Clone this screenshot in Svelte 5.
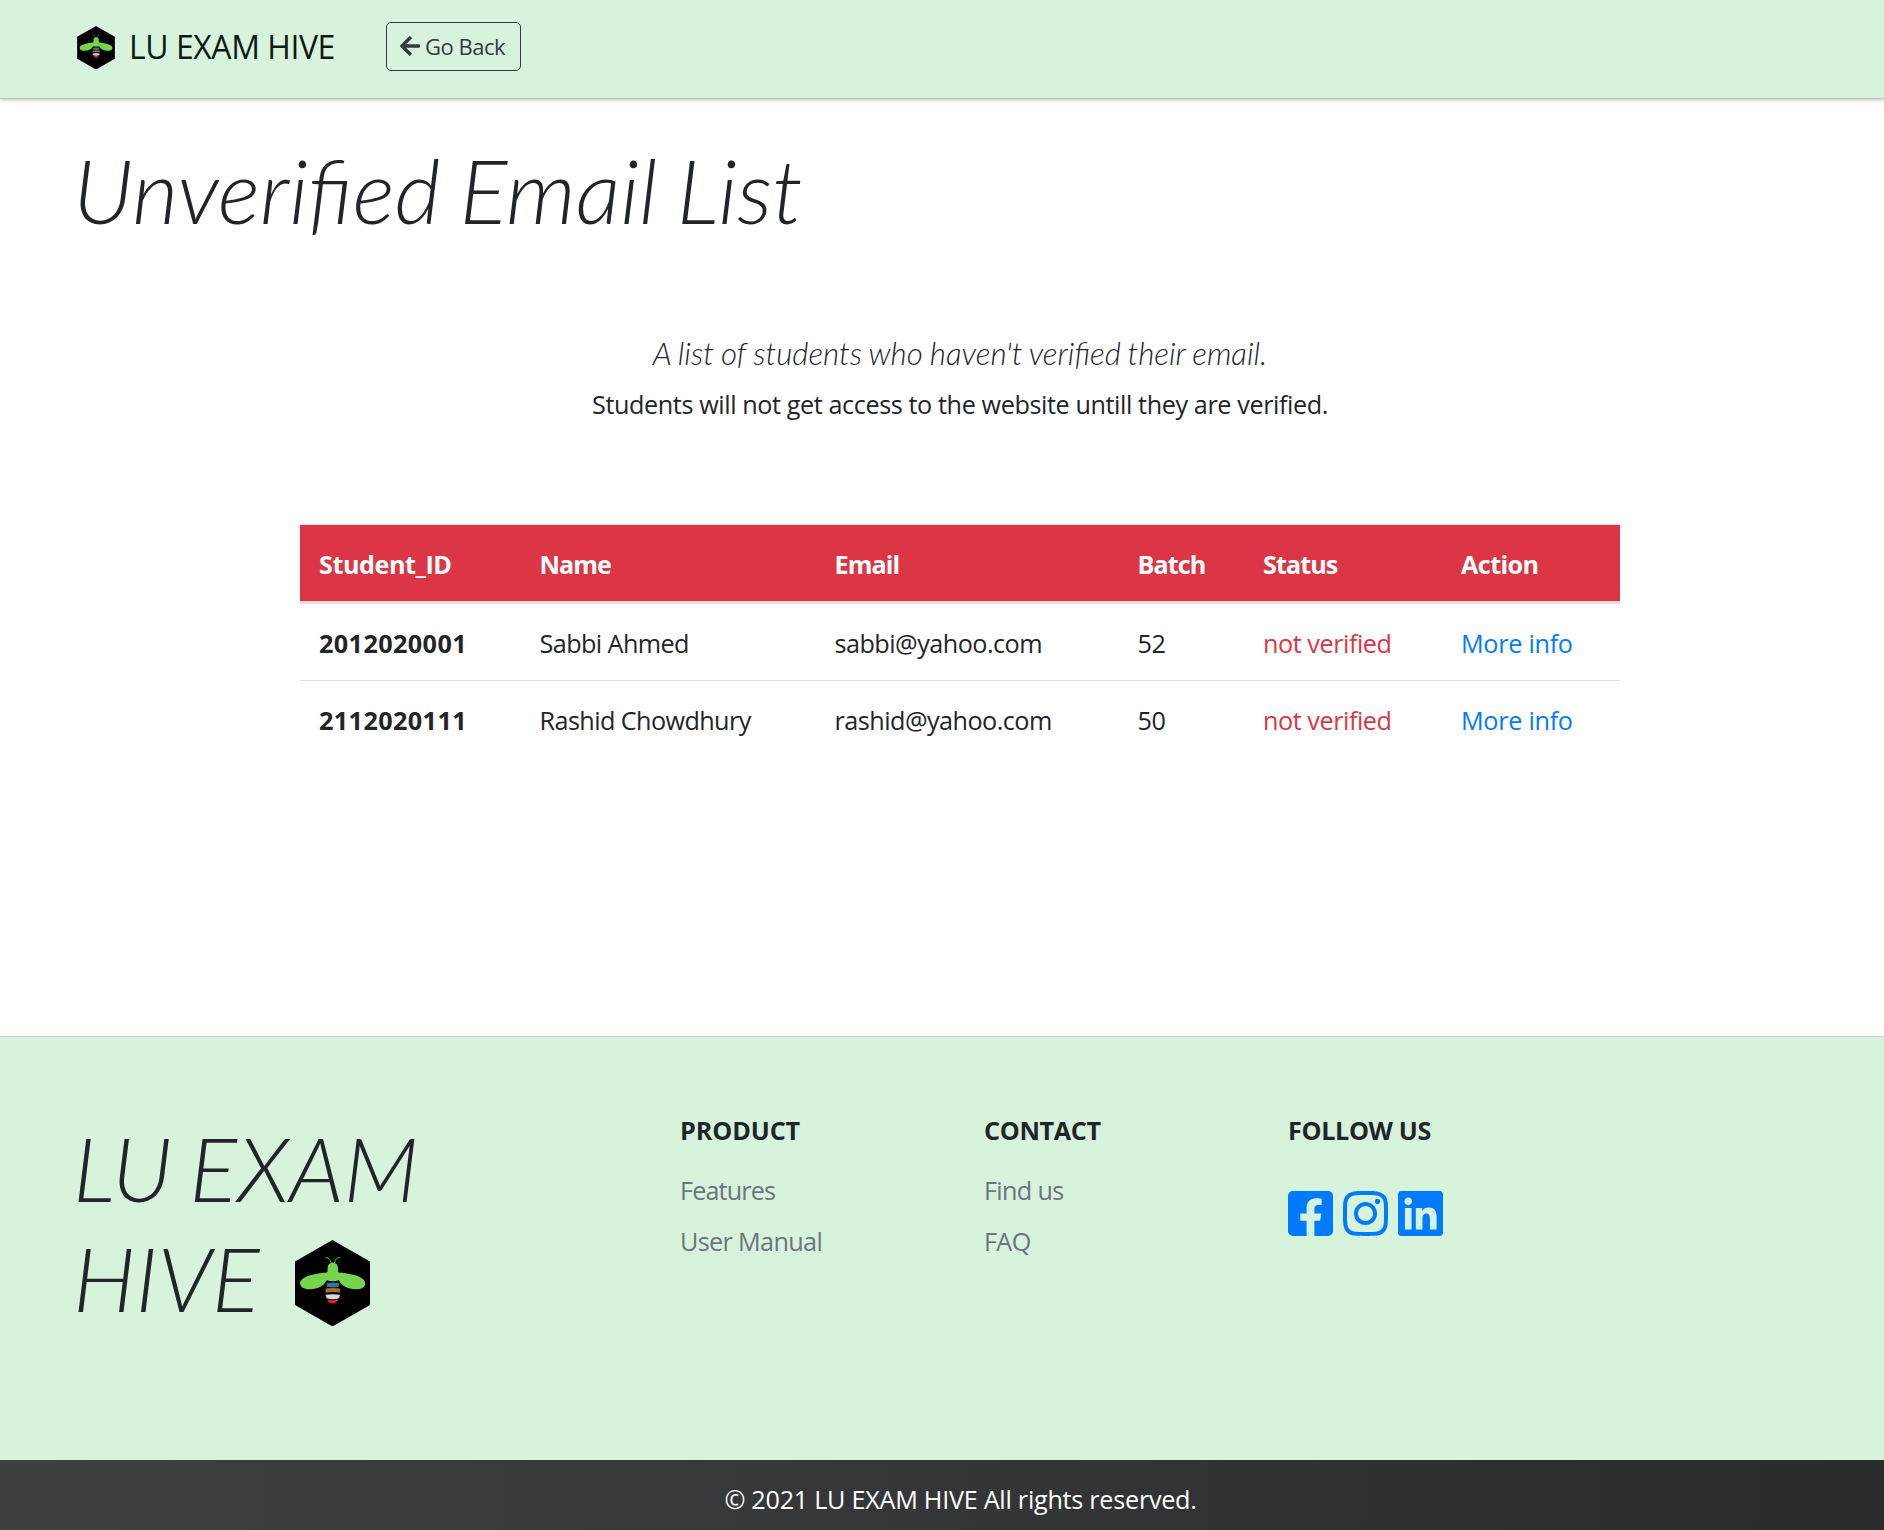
<script>
  const students = [
    { id: '2012020001', name: 'Sabbi Ahmed', email: 'sabbi@yahoo.com', batch: '52' },
    { id: '2112020111', name: 'Rashid Chowdhury', email: 'rashid@yahoo.com', batch: '50' },
  ];
</script>

{#snippet logo(kind)}
  <svg class={kind} viewBox="0 0 75 86.5" aria-hidden="true">
    <path d="M37.5 0 75 21.5V65L37.5 86.5 0 65V21.5Z" fill="#000" />
    <path d="M30.3 17.8C33.5 17.4 34.8 18.6 36.4 23.5M45.3 17.8C42.1 17.4 40.8 18.6 39.2 23.5" fill="none" stroke="#74d44c" stroke-width="0.9" />
    <path d="M32.6 28a5.2 5.6 0 0 1 10.4 0c0 2-.1 3 .6 4.600C52 33.300 66 35 69.700 41.300 72 46.200 67 49.600 60.500 49.300 52.500 48.900 46.500 46 43.900 40.300Q37.800 42 31.700 40.300C29.100 46 23.100 48.900 15.100 49.300 8.600 49.600 3.600 46.200 5.400 41.300 9.600 35 23.600 33.300 32 32.600c.7-1.600.6-2.600.6-4.600Z" fill="#74d44c" />
    <path d="M31.6 43.200Q37.8 42 44 43.200L43.600 46.800Q37.800 48 32 46.800Z" fill="#2e75b6" />
    <path d="M30.600 48.500Q37.800 47.500 45 48.500V52.400Q37.800 51.600 30.600 52.400Z" fill="#b06d22" />
    <path d="M30.600 54.800Q37.800 53.800 45 54.800L44 58.300Q37.800 60 31.600 58.300Z" fill="#d9d9d9" />
    <path d="M32.300 59.600Q37.800 61 43.300 59.600Q41.600 63.600 37.800 63.600T32.300 59.600Z" fill="#e3242b" />
  </svg>
{/snippet}

<header class="navbar">
  <a class="brand" href="#home">
    {@render logo('logo-small')}
    <span>LU EXAM HIVE</span>
  </a>
  <button class="back" type="button">
    <svg class="arrow" viewBox="0 32 448 448" aria-hidden="true">
      <path fill="currentColor" d="M257.5 445.100l-22.200 22.200c-9.400 9.400-24.600 9.400-33.900 0L7 273c-9.400-9.400-9.400-24.600 0-33.900L201.400 44.700c9.400-9.400 24.600-9.400 33.900 0l22.200 22.200c9.500 9.500 9.300 25-.4 34.300L136.600 216H424c13.300 0 24 10.700 24 24v32c0 13.300-10.700 24-24 24H136.600l120.500 114.800c9.800 9.300 10 24.800.4 34.300z" />
    </svg>
    <span>Go Back</span>
  </button>
</header>

<main>
  <h1>Unverified Email List</h1>
  <p class="lead">A list of students who haven't verified their email.</p>
  <p class="note">Students will not get access to the website untill they are verified.</p>

  <table>
    <colgroup>
      <col class="c-id" /><col class="c-name" /><col class="c-email" /><col class="c-batch" /><col class="c-status" /><col />
    </colgroup>
    <thead>
      <tr>
        <th class="wide">Student_ID</th>
        <th>Name</th>
        <th>Email</th>
        <th>Batch</th>
        <th>Status</th>
        <th class="last">Action</th>
      </tr>
    </thead>
    <tbody>
      {#each students as s}
        <tr>
          <th class="id">{s.id}</th>
          <td class="name">{s.name}</td>
          <td class="email">{s.email}</td>
          <td>{s.batch}</td>
          <td class="status">not verified</td>
          <td class="action"><a href="#info">More info</a></td>
        </tr>
      {/each}
    </tbody>
  </table>
</main>

<footer>
  <div class="columns">
    <h2 class="title">LU EXAM<br />HIVE {@render logo('logo-large')}</h2>
    <section>
      <h3 class="product">PRODUCT</h3>
      <a class="features" href="#features">Features</a>
      <a href="#manual">User Manual</a>
    </section>
    <section>
      <h3>CONTACT</h3>
      <a href="#find">Find us</a>
      <a href="#faq">FAQ</a>
    </section>
    <section>
      <h3>FOLLOW US</h3>
      <div class="social">
        <svg viewBox="0 32 448 448" role="img" aria-label="Facebook">
          <path d="M400 32H48A48 48 0 0 0 0 80v352a48 48 0 0 0 48 48h137.250V327.690h-63V256h63v-54.640c0-62.150 37-96.480 93.670-96.480 27.140 0 55.520 4.840 55.520 4.840v61h-31.270c-30.810 0-40.420 19.120-40.420 38.730V256h68.780l-11 71.690h-57.780V480H400a48 48 0 0 0 48-48V80a48 48 0 0 0-48-48z" />
        </svg>
        <svg viewBox="0 32 448 448" role="img" aria-label="Instagram">
          <path d="M224.100 141c-63.600 0-114.900 51.300-114.900 114.900s51.300 114.900 114.900 114.900S339 319.500 339 255.900 287.700 141 224.100 141zm0 189.600c-41.100 0-74.700-33.500-74.700-74.700s33.500-74.700 74.700-74.700 74.700 33.500 74.700 74.700-33.600 74.700-74.700 74.700zm146.400-194.300c0 14.900-12 26.800-26.800 26.800-14.900 0-26.800-12-26.800-26.800s12-26.800 26.800-26.800 26.800 12 26.800 26.800zm76.100 27.200c-1.700-35.900-9.900-67.700-36.200-93.900-26.200-26.200-58-34.400-93.900-36.200-37-2.100-147.900-2.100-184.900 0-35.800 1.700-67.600 9.900-93.900 36.100s-34.400 58-36.200 93.900c-2.100 37-2.100 147.900 0 184.900 1.700 35.900 9.900 67.700 36.200 93.900s58 34.400 93.900 36.200c37 2.100 147.900 2.100 184.900 0 35.900-1.700 67.700-9.900 93.900-36.200 26.200-26.200 34.400-58 36.200-93.900 2.100-37 2.100-147.800 0-184.800zM398.800 388c-7.800 19.600-22.900 34.700-42.600 42.600-29.500 11.700-99.500 9-132.100 9s-102.700 2.600-132.100-9c-19.600-7.800-34.700-22.900-42.600-42.600-11.700-29.500-9-99.500-9-132.100s-2.600-102.700 9-132.100c7.800-19.600 22.900-34.700 42.600-42.600 29.500-11.700 99.500-9 132.100-9s102.700-2.600 132.100 9c19.600 7.800 34.700 22.900 42.600 42.600 11.700 29.500 9 99.500 9 132.100s2.700 102.700-9 132.100z" />
        </svg>
        <svg viewBox="0 32 448 448" role="img" aria-label="LinkedIn">
          <path d="M416 32H31.900C14.300 32 0 46.500 0 64.300v383.400C0 465.500 14.300 480 31.900 480H416c17.600 0 32-14.500 32-32.300V64.300c0-17.800-14.400-32.300-32-32.300zM135.400 416H69V202.200h66.500V416zm-33.200-243c-21.300 0-38.500-17.300-38.500-38.500S80.900 96 102.200 96c21.200 0 38.500 17.300 38.500 38.500 0 21.300-17.200 38.500-38.500 38.500zm282.100 243h-66.400V312c0-24.800-.5-56.700-34.500-56.700-34.600 0-39.900 27-39.900 54.900V416h-66.400V202.200h63.700v29.200h.9c8.900-16.800 30.600-34.500 62.900-34.500 67.200 0 79.700 44.300 79.700 101.900V416z" />
        </svg>
      </div>
    </section>
  </div>
  <div class="copyright">© 2021 LU EXAM HIVE All rights reserved.</div>
</footer>

<style>
  :global(body) {
    margin: 0;
    overflow: hidden;
    background: #fff;
    color: #212529;
    font: 400 25.2px/38px 'Open Sans', 'Noto Sans', sans-serif;
    letter-spacing: -0.36px;
  }
  h1, h2, h3, p { margin: 0; }
  a { text-decoration: none; }

  .navbar {
    display: flex;
    align-items: center;
    box-sizing: border-box;
    height: 99px;
    padding: 0 77px 5px;
    background: #d7f3dc;
    border-bottom: 1px solid #b9c4be;
    box-shadow: 0 1px 4px rgba(60, 30, 50, 0.3);
  }
  .brand {
    display: flex;
    align-items: center;
    gap: 14px;
    width: 309px;
    color: #101a13;
    font-size: 32px;
    letter-spacing: -0.45px;
  }
  .logo-small { width: 38px; height: 43.500px; margin-top: 2px; }
  .brand span { padding-top: 1px; }
  .back {
    display: flex;
    align-items: center;
    gap: 5px;
    box-sizing: border-box;
    width: 135px;
    height: 49px;
    padding: 0 0 1px 13px;
    background: transparent;
    border: 1px solid #343a40;
    border-radius: 5px;
    color: #343a40;
    font: 400 22px/34px 'Open Sans', sans-serif;
    letter-spacing: -0.5px;
  }
  .arrow { width: 20px; height: 20px; }

  main {
    box-sizing: border-box;
    height: 937px;
    padding: 38px 37px 0 73px;
  }
  h1, .title { font-family: Lato, sans-serif; font-style: italic; font-weight: 300; letter-spacing: 0; }
  h1 { font-size: 89.300px; line-height: 106px; word-spacing: -3.500px; }
  .lead {
    margin-top: 91px;
    text-align: center;
    font: italic 300 31.300px/38px Lato, sans-serif;
    letter-spacing: 0;
    word-spacing: -0.900px;
  }
  .note { margin-top: 13px; text-align: center; letter-spacing: -0.4px; }

  table {
    width: 1320px;
    margin: 101px auto 0;
    border-collapse: separate;
    border-spacing: 0;
    table-layout: fixed;
    font-size: inherit;
    text-align: left;
  }
  .c-id { width: 220.500px; }
  .c-name { width: 295px; }
  .c-email { width: 303px; }
  .c-batch { width: 125.500px; }
  .c-status { width: 198px; }
  th, td { padding: 20px 0 18px 19px; }
  thead th {
    padding-top: 20px;
    background: #dc3545;
    background-clip: padding-box;
    border-top: 1px solid #f0d5da;
    border-bottom: 3px solid #ecdde3;
    color: #fff;
    letter-spacing: -0.95px;
  }
  thead th.wide { letter-spacing: -0.45px; }
  thead th.last { letter-spacing: -0.6px; }
  tbody tr + tr th, tbody tr + tr td { border-top: 1px solid #dee2e6; }
  .id { letter-spacing: 0.4px; }
  .name { letter-spacing: -0.58px; }
  .email { letter-spacing: -0.52px; }
  .status { color: #dc3545; letter-spacing: -0.45px; }
  .action a { color: #007bff; letter-spacing: -0.28px; }

  footer { background: #d7f3dc; border-top: 1px solid #c3d0c8; }
  .columns {
    display: grid;
    grid-template-columns: 607px 304px 304px 1fr;
    box-sizing: border-box;
    height: 423px;
    padding: 74px 0 0 73px;
  }
  .title { padding-top: 2px; font-size: 89.200px; line-height: 110px; white-space: nowrap; word-spacing: -5.500px; }
  .logo-large { width: 75px; height: 86.500px; margin-left: 18px; vertical-align: -14px; }
  section { display: flex; flex-direction: column; align-items: flex-start; }
  h3 { font-size: 25.200px; line-height: 38px; margin-bottom: 22px; }
  .product { letter-spacing: -0.1px; }
  section a { margin-bottom: 13px; color: #6c757d; letter-spacing: -0.65px; }
  section .features { letter-spacing: -0.84px; }
  .social { display: flex; gap: 9.800px; padding-top: 20px; }
  .social svg { width: 45px; height: 45px; fill: #007bff; }
  .copyright {
    box-sizing: border-box;
    height: 70px;
    padding: 20px 0 0 37px;
    background: linear-gradient(90deg, #3e4042, #2a2b2d);
    color: #fff;
    text-align: center;
    letter-spacing: -0.26px;
  }
</style>
